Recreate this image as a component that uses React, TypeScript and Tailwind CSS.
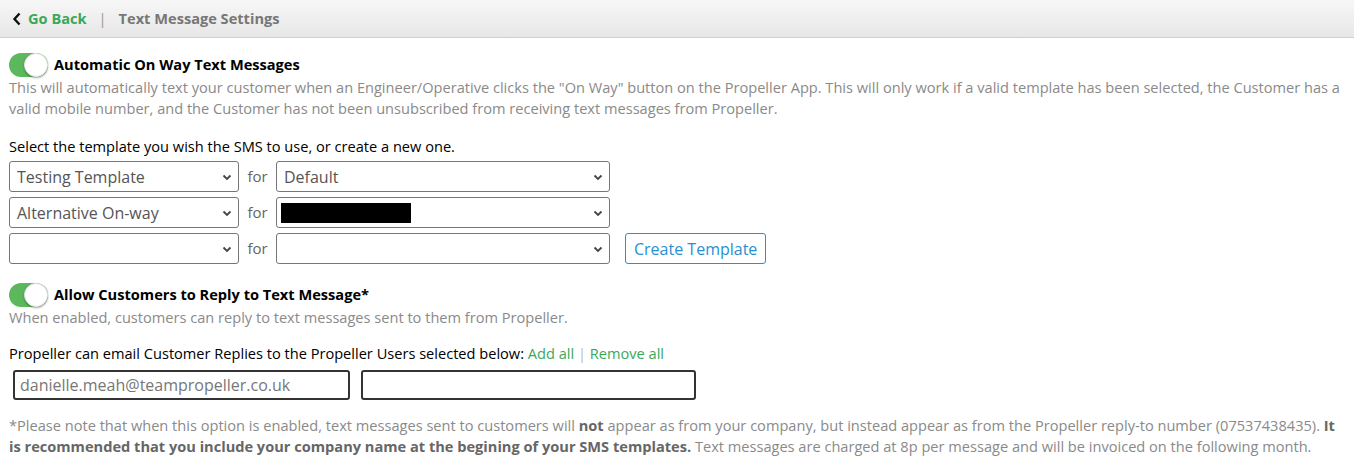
const Toggle = () => (
  <div className="relative w-[39px] h-[24px] rounded-full bg-[#5cb85c] shrink-0">
    <div className="absolute right-0 top-0 w-[24px] h-[24px] rounded-full bg-white border border-[#e3e3e3] shadow-[0_1px_2px_rgba(0,0,0,0.35)]" />
  </div>
);

const Chevron = () => (
  <svg width="10" height="10" viewBox="0 0 10 10" className="shrink-0">
    <path d="M1.5 3.5 L5 7 L8.5 3.5" fill="none" stroke="#444" strokeWidth="1.8" />
  </svg>
);

const Select = ({ value, w, children }: { value?: string; w: string; children?: React.ReactNode }) => (
  <div className={`${w} h-[31px] border border-[#767676] rounded-[3px] flex items-center justify-between pl-[7px] pr-[6px] bg-white`}>
    {children ?? <span className="text-[#555] text-[16px]">{value}</span>}
    <Chevron />
  </div>
);

const For = () => <span className="w-[37px] text-center text-[#666] text-[15px]">for</span>;

export default function App() {
  return (
    <div className="w-[1354px] h-[465px] bg-white overflow-hidden font-['Open_Sans',sans-serif] text-[14.6px]">
      <div className="h-[38px] bg-gradient-to-b from-[#f7f7f7] to-[#e7e7e7] border-b border-[#cfcfcf] flex items-center pl-[12px]">
        <svg width="10" height="14" viewBox="0 0 10 14">
          <path d="M7.5 1.5 L2.5 7 L7.5 12.5" fill="none" stroke="#111" strokeWidth="2.4" />
        </svg>
        <span className="ml-[6px] font-bold text-[#3aa859]">Go Back</span>
        <span className="ml-[12px] text-[#999]">|</span>
        <span className="ml-[12px] font-bold text-[#777]">Text Message Settings</span>
      </div>

      <div className="px-[9px] pt-[15px]">
        <div className="flex items-center gap-[6px]">
          <Toggle />
          <span className="font-bold text-black">Automatic On Way Text Messages</span>
        </div>
        <p className="text-[#8a8a8a] leading-[21px]">
          This will automatically text your customer when an Engineer/Operative clicks the "On Way" button on the Propeller App. This will only work if a valid template has been selected, the Customer has a valid mobile number, and the Customer has not been unsubscribed from receiving text messages from Propeller.
        </p>

        <p className="mt-[17px] text-black leading-[21px]">Select the template you wish the SMS to use, or create a new one.</p>
        <div className="mt-[4px] flex flex-col gap-[5px]">
          <div className="flex items-center">
            <Select value="Testing Template" w="w-[230px]" />
            <For />
            <Select value="Default" w="w-[334px]" />
          </div>
          <div className="flex items-center">
            <Select value="Alternative On-way" w="w-[230px]" />
            <For />
            <Select w="w-[334px]">
              <div className="w-[130px] h-[20px] bg-black -ml-[3px]" />
            </Select>
          </div>
          <div className="flex items-center">
            <Select value="" w="w-[230px]" />
            <For />
            <Select value="" w="w-[334px]" />
            <button className="ml-[15px] h-[31px] px-[8px] border border-[#2a8fd0] rounded-[3px] text-[#2a8fd0] text-[16px] bg-white">
              Create Template
            </button>
          </div>
        </div>

        <div className="mt-[19px] flex items-center gap-[6px]">
          <Toggle />
          <span className="font-bold text-black">Allow Customers to Reply to Text Message*</span>
        </div>
        <p className="text-[#8a8a8a] leading-[21px]">
          When enabled, customers can reply to text messages sent to them from Propeller.
        </p>

        <p className="mt-[15px] text-black leading-[21px]">
          Propeller can email Customer Replies to the Propeller Users selected below:{" "}
          <span className="text-[#3aa859]">Add all</span>
          <span className="text-[#bbb]"> | </span>
          <span className="text-[#3aa859]">Remove all</span>
        </p>
        <div className="mt-[6px] ml-[4px] flex gap-[11px]">
          <div className="w-[337px] h-[30px] border-2 border-[#333] rounded-[3px] flex items-center pl-[5px] text-[#777] text-[16px]">
            danielle.meah@teampropeller.co.uk
          </div>
          <div className="w-[335px] h-[30px] border-2 border-[#333] rounded-[3px]" />
        </div>

        <p className="mt-[15px] text-[#8a8a8a] leading-[21px]">
          *Please note that when this option is enabled, text messages sent to customers will <b className="text-[#666]">not</b> appear as from your company, but instead appear as from the Propeller reply-to number (07537438435). <b className="text-[#666]">It is recommended that you include your company name at the begining of your SMS templates.</b> Text messages are charged at 8p per message and will be invoiced on the following month.
        </p>
      </div>
    </div>
  );
}
